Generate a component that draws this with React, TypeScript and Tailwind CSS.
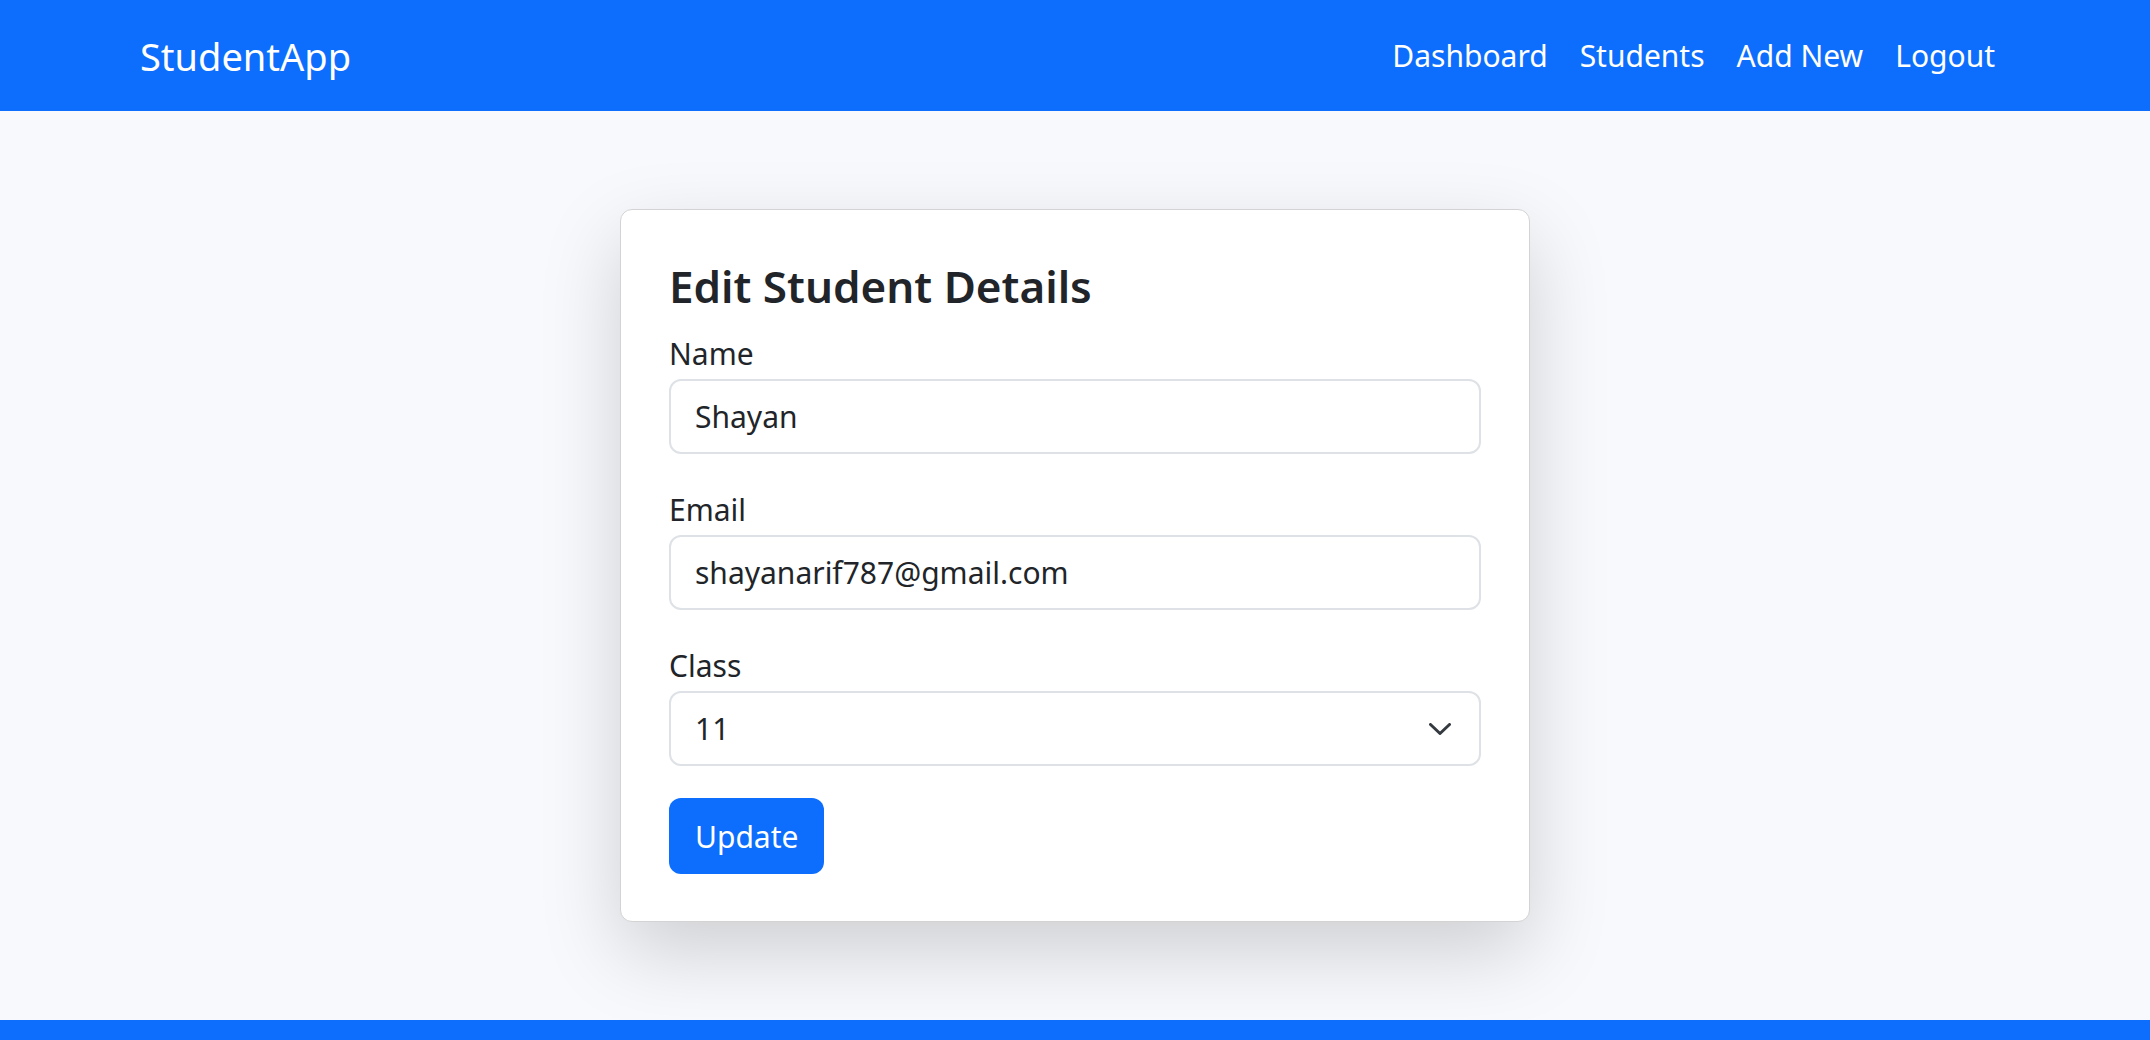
import { useState } from "react"

const navLinks = ["Dashboard", "Students", "Add New", "Logout"]

function Chevron() {
  return (
    <svg width="22" height="12" viewBox="0 0 22 12" fill="none">
      <path
        d="M1.5 1.5 11 10.5l9.5-9"
        stroke="#343a40"
        strokeWidth="3"
        strokeLinecap="round"
        strokeLinejoin="round"
      />
    </svg>
  )
}

export default function App() {
  const [name, setName] = useState("Shayan")
  const [email, setEmail] = useState("shayanarif787@gmail.com")
  const [klass, setKlass] = useState("11")

  return (
    <div className="min-h-screen flex flex-col bg-[#f8f9fc] text-[#212529] font-['Noto_Sans',sans-serif]">
      <nav className="h-[111px] bg-[#0d6efd] flex items-center pl-[140px] pr-[139px]">
        <span className="text-white text-[38px] leading-none">StudentApp</span>
        <ul className="ml-auto flex items-center">
          {navLinks.map((link) => (
            <li key={link}>
              <a className="block px-[16px] text-white text-[30px] leading-none" href="#">
                {link}
              </a>
            </li>
          ))}
        </ul>
      </nav>

      <main className="flex-1 flex justify-center pt-[98px]">
        <div className="w-[910px] h-fit bg-white border border-[#d3d3d3] rounded-[12px] shadow-[0_30px_80px_rgba(0,0,0,0.17)] px-[48px] pt-[47px] pb-[47px]">
          <h4 className="text-[44px] font-semibold leading-[58px] mb-[14px]">
            Edit Student Details
          </h4>
          <form onSubmit={(e) => e.preventDefault()}>
            <div className="mb-[31px]">
              <label className="block text-[30px] leading-[50px]">Name</label>
              <input
                className="w-full h-[75px] border-2 border-[#dee2e6] rounded-[12px] px-[24px] text-[30px] outline-none"
                value={name}
                onChange={(e) => setName(e.target.value)}
              />
            </div>
            <div className="mb-[31px]">
              <label className="block text-[30px] leading-[50px]">Email</label>
              <input
                className="w-full h-[75px] border-2 border-[#dee2e6] rounded-[12px] px-[24px] text-[30px] outline-none"
                value={email}
                onChange={(e) => setEmail(e.target.value)}
              />
            </div>
            <div className="mb-[32px]">
              <label className="block text-[30px] leading-[50px]">Class</label>
              <div className="relative">
                <select
                  className="w-full h-[75px] appearance-none border-2 border-[#dee2e6] rounded-[12px] pl-[24px] pr-[72px] text-[30px] bg-white outline-none"
                  value={klass}
                  onChange={(e) => setKlass(e.target.value)}
                >
                  {["9", "10", "11", "12"].map((c) => (
                    <option key={c} value={c}>
                      {c}
                    </option>
                  ))}
                </select>
                <div className="pointer-events-none absolute right-[30px] top-1/2 -translate-y-1/2 flex">
                  <Chevron />
                </div>
              </div>
            </div>
            <button className="h-[76px] px-[26px] bg-[#0d6efd] text-white text-[30px] rounded-[12px]">
              Update
            </button>
          </form>
        </div>
      </main>

      <footer className="h-[20px] bg-[#0d6efd]" />
    </div>
  )
}
